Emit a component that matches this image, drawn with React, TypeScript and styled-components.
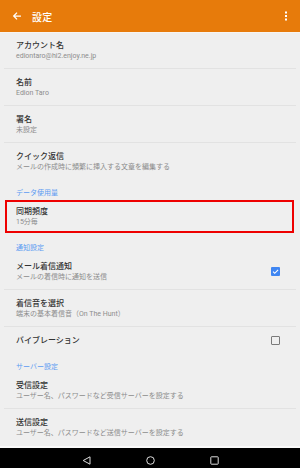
import React from 'react';
import styled, { createGlobalStyle } from 'styled-components';

const GlobalStyle = createGlobalStyle`
  html, body {
    margin: 0;
    padding: 0;
    background: #efefef;
  }
  body {
    font-family: Roboto, "Noto Sans CJK JP", sans-serif;
  }
`;

export const Screen = styled.div`
  width: 300px;
  height: 468px;
  display: flex;
  flex-direction: column;
  background: #efefef;
  overflow: hidden;
`;

export const AppBar = styled.header`
  height: 32px;
  flex: none;
  display: flex;
  align-items: center;
  padding: 0 12px;
  background: #e77b0b;
  border-bottom: 1px solid #f7f4f1;
  color: #fff;
`;

export const AppTitle = styled.div`
  margin-left: 10px;
  font-family: "Noto Sans CJK JP", sans-serif;
  font-size: 10px;
  font-weight: 500;
  letter-spacing: 0.2px;
  flex: 1;
`;

export const List = styled.div`
  flex: 1;
  display: flex;
  flex-direction: column;
`;

export const Row = styled.div<{ $divider?: boolean; $single?: boolean; $highlight?: boolean }>`
  position: relative;
  flex: none;
  display: flex;
  align-items: center;
  box-sizing: border-box;
  height: ${(p) => (p.$single ? 27 : 37)}px;
  margin: 0 4px;
  padding: 0 12px;
  border-bottom: 1px solid ${(p) => (p.$divider ? '#e2e2e2' : 'transparent')};

  &:first-child {
    height: 36px;
    padding-top: 0;
  }
  &:first-child > div:first-child {
    padding-top: 7px;
  }

  ${(p) => p.$highlight && `
    &::after {
      content: '';
      position: absolute;
      left: 1px;
      right: 2px;
      top: 2px;
      bottom: 1px;
      border: 2px solid #ee0000;
      pointer-events: none;
    }
  `}
`;

export const RowText = styled.div<{ $single?: boolean }>`
  flex: 1;
  align-self: ${(p) => (p.$single ? 'center' : 'flex-start')};
  display: flex;
  flex-direction: column;
  gap: 1px;
  padding-top: ${(p) => (p.$single ? 0 : 8)}px;
`;

export const RowTitle = styled.div`
  font-family: "Noto Sans CJK JP", Roboto, sans-serif;
  font-size: 8px;
  line-height: 10px;
  font-weight: 500;
  color: #333;
`;

export const RowSub = styled.div`
  font-family: Roboto, "Noto Sans CJK JP", sans-serif;
  font-size: 7px;
  line-height: 10px;
  color: #8d8d8d;
`;

export const Category = styled.div`
  flex: none;
  height: 18px;
  padding: 7px 16px 0;
  box-sizing: border-box;
  font-family: "Noto Sans CJK JP", sans-serif;
  font-size: 7px;
  line-height: 10px;
  color: #5d9cf2;
`;

export const Check = styled.div<{ $checked?: boolean }>`
  width: 9px;
  height: 9px;
  box-sizing: border-box;
  border-radius: 1px;
  display: flex;
  align-items: center;
  justify-content: center;
  margin-right: 4px;
  background: ${(p) => (p.$checked ? '#3f86f2' : 'transparent')};
  border: ${(p) => (p.$checked ? 'none' : '1.5px solid #7a7a7a')};
`;

export const NavBar = styled.nav`
  height: 25px;
  flex: none;
  background: #000;
  border-top: 2px solid #fafafa;
  display: flex;
  align-items: center;
  justify-content: center;
  gap: 55px;
`;

const BackArrow = () => (
  <svg width="10" height="10" viewBox="0 0 24 24" fill="none" stroke="#fff" strokeWidth="3" strokeLinecap="square">
    <path d="M20 12H5M11 5l-7 7 7 7" />
  </svg>
);

const MoreDots = () => (
  <svg width="4" height="10" viewBox="0 0 4 10" fill="#fff">
    <rect x="1" y="0.5" width="2" height="2" />
    <rect x="1" y="4" width="2" height="2" />
    <rect x="1" y="7.5" width="2" height="2" />
  </svg>
);

const Tick = () => (
  <svg width="7" height="7" viewBox="0 0 10 10" fill="none" stroke="#fff" strokeWidth="1.6">
    <path d="M1.5 5.2l2.4 2.4L8.7 2.6" />
  </svg>
);

const NavBack = () => (
  <svg width="9" height="9" viewBox="0 0 9 9" fill="none" stroke="#ddd" strokeWidth="1">
    <path d="M8 0.8v7.4L1.2 4.5z" strokeLinejoin="round" />
  </svg>
);

const NavHome = () => (
  <svg width="9" height="9" viewBox="0 0 9 9" fill="none" stroke="#ddd" strokeWidth="1">
    <circle cx="4.5" cy="4.5" r="3.8" />
  </svg>
);

const NavRecent = () => (
  <svg width="9" height="9" viewBox="0 0 9 9" fill="none" stroke="#ddd" strokeWidth="1">
    <rect x="0.8" y="0.8" width="7.4" height="7.4" rx="0.6" />
  </svg>
);

type Item = {
  title: string;
  sub?: string;
  divider?: boolean;
  check?: boolean;
  highlight?: boolean;
};

const PrefRow = ({ item }: { item: Item }) => (
  <Row $divider={item.divider} $single={!item.sub} $highlight={item.highlight}>
    <RowText $single={!item.sub}>
      <RowTitle>{item.title}</RowTitle>
      {item.sub && <RowSub>{item.sub}</RowSub>}
    </RowText>
    {item.check !== undefined && (
      <Check $checked={item.check}>{item.check && <Tick />}</Check>
    )}
  </Row>
);

const App: React.FC = () => {
  return (
    <>
      <GlobalStyle />
      <Screen>
        <AppBar>
          <BackArrow />
          <AppTitle>設定</AppTitle>
          <MoreDots />
        </AppBar>
        <List>
          <PrefRow item={{ title: 'アカウント名', sub: 'ediontaro@hi2.enjoy.ne.jp', divider: true }} />
          <PrefRow item={{ title: '名前', sub: 'Edion Taro', divider: true }} />
          <PrefRow item={{ title: '署名', sub: '未設定', divider: true }} />
          <PrefRow item={{ title: 'クイック返信', sub: 'メールの作成時に頻繁に挿入する文章を編集する' }} />
          <Category>データ使用量</Category>
          <PrefRow item={{ title: '同期頻度', sub: '15分毎', highlight: true }} />
          <Category>通知設定</Category>
          <PrefRow item={{ title: 'メール着信通知', sub: 'メールの着信時に通知を送信', divider: true, check: true }} />
          <PrefRow item={{ title: '着信音を選択', sub: '端末の基本着信音（On The Hunt）', divider: true }} />
          <PrefRow item={{ title: 'バイブレーション', check: false }} />
          <Category>サーバー設定</Category>
          <PrefRow item={{ title: '受信設定', sub: 'ユーザー名、パスワードなど受信サーバーを設定する', divider: true }} />
          <PrefRow item={{ title: '送信設定', sub: 'ユーザー名、パスワードなど送信サーバーを設定する' }} />
        </List>
        <NavBar>
          <NavBack />
          <NavHome />
          <NavRecent />
        </NavBar>
      </Screen>
    </>
  );
};

export default App;
